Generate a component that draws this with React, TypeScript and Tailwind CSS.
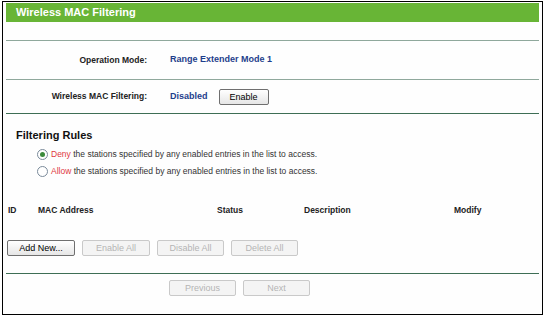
import React from 'react';

const font = { fontFamily: '"Liberation Sans", Arial, sans-serif' };

function Btn({ label, disabled, w }: { label: string; disabled?: boolean; w: string }) {
  return (
    <button
      className={`${w} h-[16px] rounded-[2px] border text-[9px] leading-[14px] ${
        disabled
          ? 'border-[#c9c9c9] bg-[#f4f4f4] text-[#b4b4b4]'
          : 'border-[#6f6f6f] bg-gradient-to-b from-white to-[#e6e6e6] text-black'
      }`}
    >
      {label}
    </button>
  );
}

function Line({ dark }: { dark?: boolean }) {
  return <div className={`h-[1px] ${dark ? 'bg-[#3e6e55]' : 'bg-[#8fa89c]'}`} />;
}

export default function App() {
  return (
    <div className="w-[545px] h-[316px] bg-white pt-[1px] pl-[2px]" style={font}>
      <div className="w-[541px] h-[314px] border border-black px-[3px] pt-[1px] flex flex-col bg-[#fefefe]">
        {/* header */}
        <div className="h-[19px] bg-[#68b536] flex items-center pl-[10px]">
          <span className="text-white font-bold text-[11px]">Wireless MAC Filtering</span>
        </div>
        <div className="h-[18px]" />
        <Line />
        <div className="h-[38px] flex items-center text-[8.5px]">
          <div className="w-[141px] text-right font-bold text-[#222]">Operation Mode:</div>
          <div className="ml-[23px] font-bold text-[9px] text-[#1e3e8c]">Range Extender Mode 1</div>
        </div>
        <Line />
        <div className="h-[33px] flex items-center text-[8.5px]">
          <div className="w-[141px] text-right font-bold text-[#222]">Wireless MAC Filtering:</div>
          <div className="ml-[23px] font-bold text-[9px] text-[#1e3e8c]">Disabled</div>
          <div className="ml-[11px]">
            <Btn label="Enable" w="w-[50px]" />
          </div>
        </div>
        <Line dark />

        {/* filtering rules */}
        <div className="pl-[10px] pt-[14px] text-[11px] font-bold text-[#111] leading-[14px]">Filtering Rules</div>
        <div className="pl-[31px] pt-[6px] flex flex-col gap-[5px] text-[8.5px] text-[#333]">
          <div className="flex items-center h-[12px]">
            <span className="w-[11px] h-[11px] rounded-full border border-[#7a8a9a] flex items-center justify-center bg-white">
              <span className="w-[5px] h-[5px] rounded-full bg-[#3c8a3c]" />
            </span>
            <span className="ml-[3px]">
              <span className="text-[#e0393e]">Deny</span> the stations specified by any enabled entries in the list to access.
            </span>
          </div>
          <div className="flex items-center h-[12px]">
            <span className="w-[11px] h-[11px] rounded-full border border-[#7a8a9a] bg-white" />
            <span className="ml-[3px]">
              <span className="text-[#e0393e]">Allow</span> the stations specified by any enabled entries in the list to access.
            </span>
          </div>
        </div>

        {/* table header */}
        <div className="mt-[27px] flex text-[8.5px] font-bold text-[#222] pl-[2px]">
          <div className="w-[30px]">ID</div>
          <div className="w-[179px]">MAC Address</div>
          <div className="w-[87px]">Status</div>
          <div className="w-[150px]">Description</div>
          <div>Modify</div>
        </div>

        <div className="mt-[23px] flex gap-[7px] pl-[1px]">
          <Btn label="Add New..." w="w-[68px]" />
          <Btn label="Enable All" disabled w="w-[68px]" />
          <Btn label="Disable All" disabled w="w-[67px]" />
          <Btn label="Delete All" disabled w="w-[67px]" />
        </div>
        <div className="mt-[17px]">
          <Line dark />
        </div>
        <div className="mt-[6px] flex gap-[7px] pl-[163px]">
          <Btn label="Previous" disabled w="w-[67px]" />
          <Btn label="Next" disabled w="w-[67px]" />
        </div>
      </div>
    </div>
  );
}
